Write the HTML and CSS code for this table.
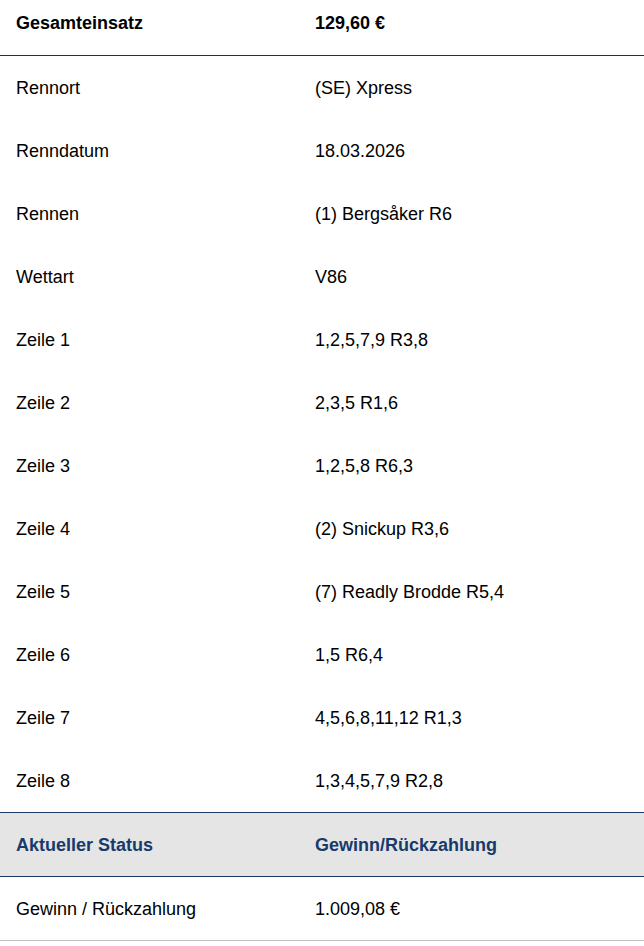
FILE: index.html
```html
<!DOCTYPE html>
<html lang="de">
<head>
<meta charset="utf-8">
<link rel="stylesheet" href="styles.css">
</head>
<body>
<div class="table">
  <div class="row head"><div class="cell">Gesamteinsatz</div><div class="cell">129,60 €</div></div>
  <div class="row"><div class="cell">Rennort</div><div class="cell">(SE) Xpress</div></div>
  <div class="row"><div class="cell">Renndatum</div><div class="cell">18.03.2026</div></div>
  <div class="row"><div class="cell">Rennen</div><div class="cell">(1) Bergsåker R6</div></div>
  <div class="row"><div class="cell">Wettart</div><div class="cell">V86</div></div>
  <div class="row"><div class="cell">Zeile 1</div><div class="cell">1,2,5,7,9 R3,8</div></div>
  <div class="row"><div class="cell">Zeile 2</div><div class="cell">2,3,5 R1,6</div></div>
  <div class="row"><div class="cell">Zeile 3</div><div class="cell">1,2,5,8 R6,3</div></div>
  <div class="row"><div class="cell">Zeile 4</div><div class="cell">(2) Snickup R3,6</div></div>
  <div class="row"><div class="cell">Zeile 5</div><div class="cell">(7) Readly Brodde R5,4</div></div>
  <div class="row"><div class="cell">Zeile 6</div><div class="cell">1,5 R6,4</div></div>
  <div class="row"><div class="cell">Zeile 7</div><div class="cell">4,5,6,8,11,12 R1,3</div></div>
  <div class="row"><div class="cell">Zeile 8</div><div class="cell">1,3,4,5,7,9 R2,8</div></div>
  <div class="row status"><div class="cell">Aktueller Status</div><div class="cell">Gewinn/Rückzahlung</div></div>
  <div class="row last"><div class="cell">Gewinn / Rückzahlung</div><div class="cell">1.009,08 €</div></div>
</div>
</body>
</html>
```
FILE: styles.css
```css
html, body {
  margin: 0;
  padding: 0;
  background: #ffffff;
}
body {
  font-family: "Liberation Sans", Arial, sans-serif;
  font-size: 18px;
  color: #000000;
}
.table {
  display: flex;
  flex-direction: column;
  width: 644px;
}
.row {
  display: grid;
  grid-template-columns: 299px 1fr;
  align-items: center;
  height: 63px;
  padding-left: 16px;
  line-height: 20px;
}
.row.head {
  height: 56px;
  align-items: start;
  padding-top: 13px;
  box-sizing: border-box;
  font-weight: bold;
  border-bottom: 1px solid #1c2f4d;
}
.row.status {
  background: #e5e5e5;
  color: #173a6b;
  font-weight: bold;
  border-top: 1px solid #1c3a66;
  border-bottom: 1px solid #1c3a66;
}
.row.last {
  border-bottom: 1px solid #bdbdbd;
}
```
